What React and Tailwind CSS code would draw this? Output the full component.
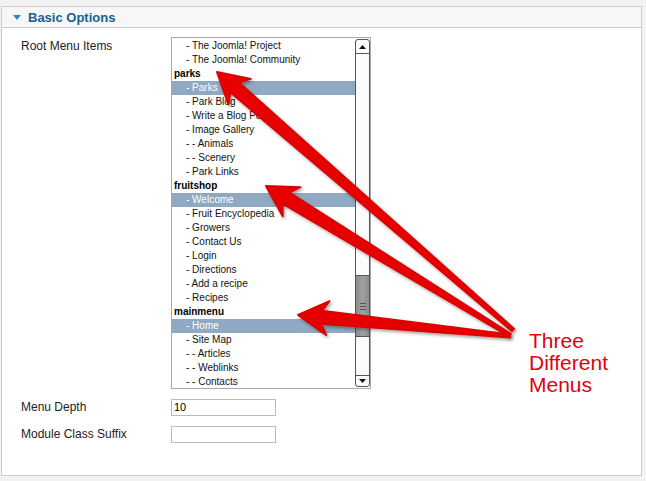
import React from 'react';

const rows = [
  { t: '- The Joomla! Project' },
  { t: '- The Joomla! Community' },
  { t: 'parks', group: true },
  { t: '- Parks', sel: true },
  { t: '- Park Blog' },
  { t: '- Write a Blog Post' },
  { t: '- Image Gallery' },
  { t: '- - Animals' },
  { t: '- - Scenery' },
  { t: '- Park Links' },
  { t: 'fruitshop', group: true },
  { t: '- Welcome', sel: true },
  { t: '- Fruit Encyclopedia' },
  { t: '- Growers' },
  { t: '- Contact Us' },
  { t: '- Login' },
  { t: '- Directions' },
  { t: '- Add a recipe' },
  { t: '- Recipes' },
  { t: 'mainmenu', group: true },
  { t: '- Home', sel: true },
  { t: '- Site Map' },
  { t: '- - Articles' },
  { t: '- - Weblinks' },
  { t: '- - Contacts' },
];

// arrow polygon from tip to tail, widening toward the head
const arrowPoints = (tip, tail, L = 30, W = 17, w1 = 13, w0 = 3) => {
  const dx = tail[0] - tip[0];
  const dy = tail[1] - tip[1];
  const len = Math.hypot(dx, dy);
  const ux = dx / len, uy = dy / len;
  const nx = -uy, ny = ux;
  const p = (d, n) => `${tip[0] + ux * d + nx * n},${tip[1] + uy * d + ny * n}`;
  return [p(0, 0), p(L, W), p(L * 0.78, w1 / 2), p(len, w0 / 2), p(len, -w0 / 2), p(L * 0.78, -w1 / 2), p(L, -W)].join(' ');
};

const arrows = [
  [[217, 72], [513, 330]],
  [[266, 186], [510, 335]],
  [[298, 315], [510, 336]],
];

const Scrollbar = () => (
  <div className="w-[15px] my-[1px] border border-[#555] rounded-[3px] bg-[#fbfbfb] flex flex-col overflow-hidden">
    <div className="h-[14px] border-b border-[#555] flex items-center justify-center shrink-0">
      <svg width="7" height="4" viewBox="0 0 7 4"><polygon points="0,4 7,4 3.5,0" fill="#111" /></svg>
    </div>
    <div className="h-[221px] shrink-0" />
    <div className="h-[62px] shrink-0 border-y border-[#555] bg-gradient-to-r from-[#8c8c8c] via-[#a0a0a0] to-[#8c8c8c] flex flex-col items-center justify-center gap-[2px]">
      <div className="w-[6px] h-px bg-[#555]" />
      <div className="w-[6px] h-px bg-[#555]" />
      <div className="w-[6px] h-px bg-[#555]" />
    </div>
    <div className="flex-1" />
    <div className="h-[11px] border-t border-[#555] flex items-center justify-center shrink-0">
      <svg width="7" height="4" viewBox="0 0 7 4"><polygon points="0,0 7,0 3.5,4" fill="#111" /></svg>
    </div>
  </div>
);

export default function App() {
  return (
    <div className="relative w-[646px] h-[481px] bg-[#f2f2f2] pt-[6px] pl-[1px] overflow-hidden" style={{ fontFamily: '"Liberation Sans", Arial, sans-serif' }}>
      <div className="w-[641px] h-[470px] border border-[#cccccc] bg-white">
        {/* header */}
        <div className="h-[21px] bg-[#f7f7f7] border-b border-[#cccccc] flex items-center pl-[11px]">
          <svg width="8" height="5" viewBox="0 0 8 5" className="mr-[7px]"><polygon points="0,0 8,0 4,5" fill="#2b87c2" /></svg>
          <span className="text-[13px] font-bold text-[#1b5e91] leading-none">Basic Options</span>
        </div>

        {/* body */}
        <div className="pt-[9px] pl-[19px] text-[12px] text-[#222]">
          <div className="flex">
            <div className="w-[150px] pt-[2px] leading-[14px]">Root Menu Items</div>
            <div className="w-[200px] h-[352px] border border-[#a9a9a9] flex bg-white">
              <div className="flex-1 overflow-hidden pt-[1px]">
                {rows.map((r, i) => (
                  <div
                    key={i}
                    className={
                      r.group
                        ? 'h-[14px] leading-[14px] text-[10px] font-bold pl-[2px] text-black whitespace-nowrap'
                        : r.sel
                        ? 'h-[14px] leading-[14px] text-[10px] pl-[14px] bg-[#8ea9c1] text-white whitespace-nowrap'
                        : 'h-[14px] leading-[14px] text-[10px] pl-[14px] text-[#111] whitespace-nowrap'
                    }
                  >
                    {r.t}
                  </div>
                ))}
              </div>
              <Scrollbar />
            </div>
          </div>

          <div className="flex items-center mt-[9px]">
            <div className="w-[150px]">Menu Depth</div>
            <div className="w-[105px] h-[17px] border border-[#bbbbbb] text-[11px] leading-[15px] pl-[2px] text-black">10</div>
          </div>
          <div className="flex items-center mt-[9px]">
            <div className="w-[150px]">Module Class Suffix</div>
            <div className="w-[105px] h-[17px] border border-[#bbbbbb]" />
          </div>
        </div>
      </div>

      {/* annotation arrows */}
      <svg className="absolute left-0 top-0 pointer-events-none" width="646" height="481">
        <defs>
          <filter id="sh" x="-20%" y="-20%" width="140%" height="140%">
            <feDropShadow dx="1.5" dy="2" stdDeviation="1.5" floodColor="#000" floodOpacity="0.35" />
          </filter>
        </defs>
        {arrows.map(([tip, tail], i) => (
          <polygon key={i} points={arrowPoints(tip, tail)} fill="#e60000" stroke="#dd0000" strokeWidth="2" strokeLinejoin="round" filter="url(#sh)" />
        ))}
      </svg>

      <div className="absolute left-[529px] top-[330px] text-[21px] leading-[22px] text-[#e3000f]">
        Three
        <br />
        Different
        <br />
        Menus
      </div>
    </div>
  );
}
